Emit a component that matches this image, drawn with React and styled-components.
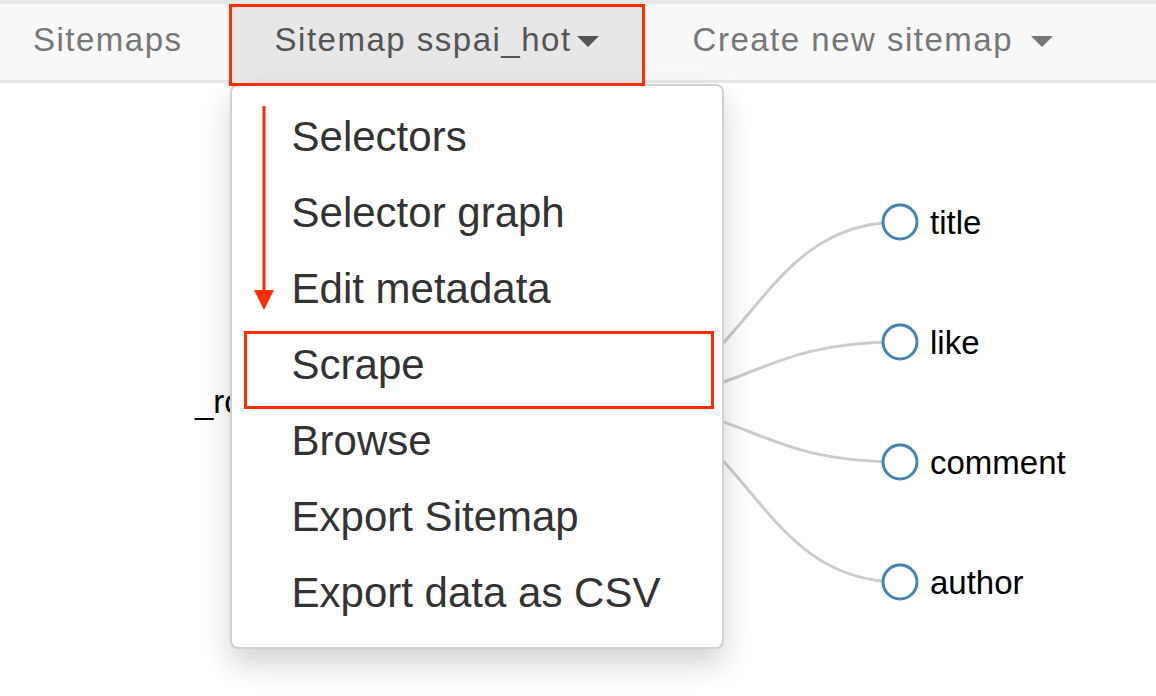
import styled, { createGlobalStyle } from 'styled-components';

const GlobalStyle = createGlobalStyle`
  html, body {
    margin: 0;
    padding: 0;
    background: #fff;
    font-family: "Liberation Sans", Arial, sans-serif;
  }
`;

const Page = styled.div`
  width: 1156px;
  height: 696px;
  overflow: hidden;
  display: flex;
  flex-direction: column;
`;

const Navbar = styled.nav`
  display: flex;
  align-items: flex-start;
  height: 76px;
  flex-shrink: 0;
  background: #f8f8f8;
  border-top: 4px solid #e7e7e7;
  border-bottom: 3px solid #e7e7e7;
  position: relative;
  z-index: 2;
`;

const NavLink = styled.div`
  display: flex;
  align-items: center;
  height: 76px;
  box-sizing: border-box;
  padding: 0 ${(p) => p.$right}px 4px ${(p) => p.$left}px;
  font-size: 33px;
  letter-spacing: 1.5px;
  color: #777;
  white-space: nowrap;
`;

const ActiveTab = styled(NavLink)`
  position: relative;
  height: 80px;
  padding-bottom: 8px;
  background: #e7e7e7;
  color: #555;

  &::after {
    content: '';
    position: absolute;
    top: 0;
    left: -2px;
    right: -2px;
    bottom: -2px;
    border: 3px solid #fe2d00;
    z-index: 2;
  }
`;

const Caret = styled.span`
  display: inline-block;
  width: 0;
  height: 0;
  margin-left: ${(p) => p.$gap}px;
  border-top: 11px solid currentColor;
  border-left: 11px solid transparent;
  border-right: 11px solid transparent;
  position: relative;
  top: 1px;
`;

const Dropdown = styled.ul`
  position: absolute;
  top: 80px;
  left: -1px;
  z-index: 1;
  width: 494px;
  height: 565px;
  box-sizing: border-box;
  margin: 0;
  padding: 13px 0 0;
  list-style: none;
  background: #fff;
  border: 2px solid rgba(0, 0, 0, 0.18);
  border-radius: 8px;
  box-shadow: 0 15px 30px rgba(0, 0, 0, 0.175);
  letter-spacing: 0;
`;

const MenuItem = styled.li`
  position: relative;
  height: 76px;
  line-height: 76px;
  padding-left: 60px;
  font-size: 42px;
  color: #333;
`;

const Highlight = styled.span`
  position: absolute;
  top: 4px;
  left: 12px;
  right: 8px;
  bottom: -6px;
  border: 3px solid #fe2d00;
`;

const Arrow = styled.svg`
  position: absolute;
  left: 22px;
  top: 20px;
`;

const Canvas = styled.div`
  flex: 1;
  position: relative;
  z-index: 1;

  svg {
    display: block;
  }
`;

const nodes = [
  { name: 'title', y: 222 },
  { name: 'like', y: 342 },
  { name: 'comment', y: 462 },
  { name: 'author', y: 582 },
];

const items = [
  'Selectors',
  'Selector graph',
  'Edit metadata',
  'Scrape',
  'Browse',
  'Export Sitemap',
  'Export data as CSV',
];

export default function App() {
  const root = { x: 600, y: 402 };
  return (
    <Page>
      <GlobalStyle />
      <Navbar>
        <NavLink $left={33} $right={48}>
          Sitemaps
        </NavLink>
        <ActiveTab $left={44} $right={44}>
          Sitemap sspai_hot
          <Caret $gap={5} />
          <Dropdown>
            <Arrow width="20" height="204" viewBox="0 0 20 204">
              <rect x="8.5" y="0" width="3" height="186" fill="#fe2d00" />
              <polygon points="0,184 20,184 10,204" fill="#fe2d00" />
            </Arrow>
            {items.map((item) => (
              <MenuItem key={item}>
                {item}
                {item === 'Scrape' && <Highlight />}
              </MenuItem>
            ))}
          </Dropdown>
        </ActiveTab>
        <NavLink $left={50} $right={30}>
          Create new sitemap
          <Caret $gap={18} />
        </NavLink>
      </Navbar>
      <Canvas>
        <svg width="1156" height="613">
          <g transform="translate(0,-83)">
            {nodes.map((n) => (
              <path
                key={n.name}
                d={`M${root.x},${root.y} C750,${root.y} 750,${n.y} 900,${n.y}`}
                fill="none"
                stroke="#ccc"
                strokeWidth="3"
              />
            ))}
            <text
              x="195"
              y="413"
              fontSize="33"
              fontFamily="Liberation Sans, Arial, sans-serif"
              fill="#000"
            >
              _root
            </text>
            {nodes.map((n) => (
              <g key={n.name}>
                <circle
                  cx="900"
                  cy={n.y}
                  r="17"
                  fill="#fff"
                  stroke="#4682b4"
                  strokeWidth="3"
                />
                <text
                  x="930"
                  y={n.y + 11.5}
                  fontSize="33"
                  fontFamily="Liberation Sans, Arial, sans-serif"
                  fill="#000"
                >
                  {n.name}
                </text>
              </g>
            ))}
          </g>
        </svg>
      </Canvas>
    </Page>
  );
}
